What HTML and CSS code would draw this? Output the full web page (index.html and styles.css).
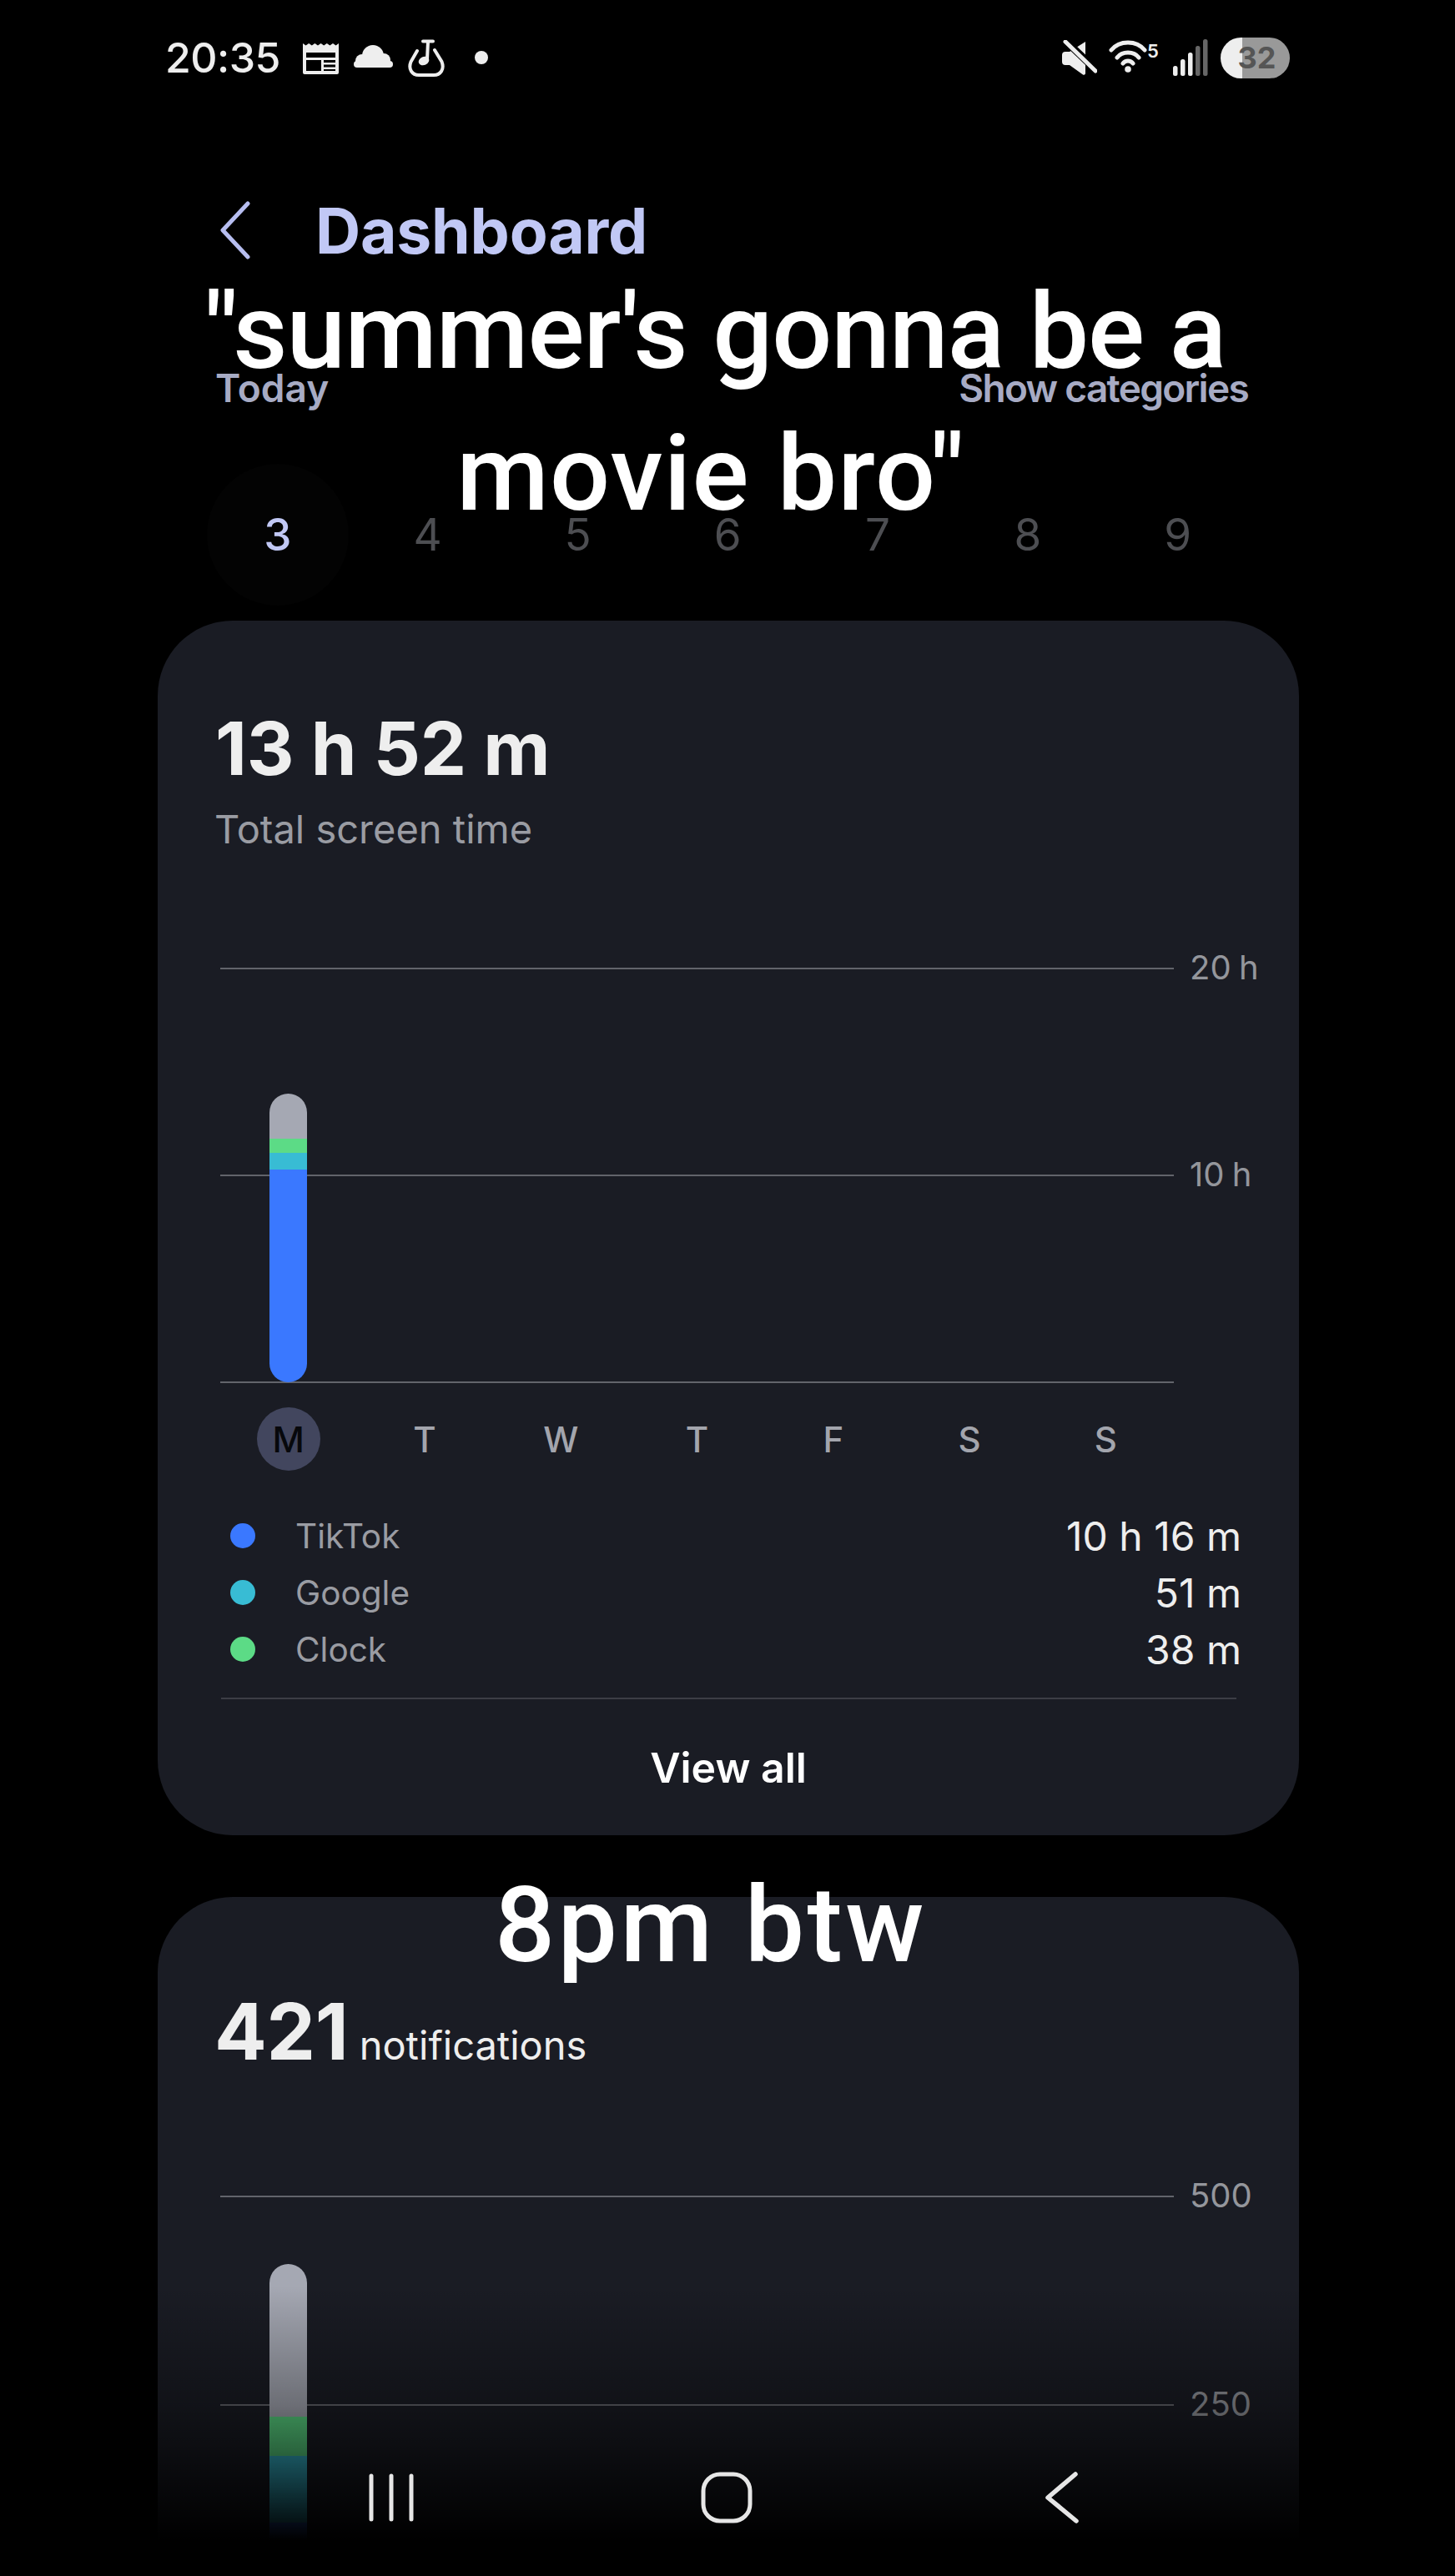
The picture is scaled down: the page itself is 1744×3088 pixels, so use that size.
FILE: index.html
```html
<!DOCTYPE html>
<html lang="en">
<head>
<meta charset="utf-8">
<title>Dashboard</title>
<link rel="stylesheet" href="styles.css">
</head>
<body>
<div class="page">
  <header class="status">
    <span class="clock">20:35</span>
    <svg class="ic-cal" viewBox="0 0 43 37" aria-hidden="true"><path fill="#eee" fill-rule="evenodd" d="M0 0l3.6 2.6L7.2 0l3.6 2.6L14.4 0 18 2.6 21.600 0l3.6 2.600L28.800 0l3.600 2.600L36 0l3.600 2.600L43 0v35a2 2 0 0 1-2 2H2a2 2 0 0 1-2-2zM4 11v6h35v-6zM4 20v13h18V20zM25 20v3h14v-3zM25 25.500v3h14v-3zM25 31v2h14v-2z"/></svg>
    <svg class="ic-cloud" viewBox="0 0 47 27" aria-hidden="true"><g fill="#eee"><circle cx="23" cy="13" r="13"/><circle cx="36" cy="18" r="8"/><circle cx="10" cy="19" r="8"/><rect x="0" y="19" width="47" height="8" rx="4"/></g></svg>
    <svg class="ic-note" viewBox="0 0 44 45" aria-hidden="true"><g fill="none" stroke="#eee" stroke-width="4" stroke-linecap="round"><path d="M11 14L3.500 27C0 36 5 43 13 43H31C39 43 44 36 40.500 27L32 13"/><path d="M18 2.500H30M24 3L23 24"/></g><ellipse cx="19" cy="26" rx="6.500" ry="5" fill="#eee" transform="rotate(-25 19 26)"/></svg>
    <span class="dot"></span>
    <div class="status-right">
      <svg class="ic-mute" viewBox="0 0 43 43" aria-hidden="true"><path fill="#eee" d="M1 18a4 4 0 0 1 4-4h5L29 2v38a2 2 0 0 1-3 1.500L10 30H5a4 4 0 0 1-4-4z"/><path d="M2 -2L44 38" stroke="#000" stroke-width="9"/><path d="M5 2L41 37" stroke="#eee" stroke-width="5" stroke-linecap="round"/></svg>
      <svg class="ic-wifi" viewBox="0 0 46 40" aria-hidden="true"><g fill="none" stroke="#eee" stroke-width="5" stroke-linecap="round"><path d="M3 13C13 1 33 1 43 13"/><path d="M10 22C16 14 30 14 36 22"/><path d="M17 29C20 25 26 25 29 29"/></g><circle cx="23" cy="36" r="3.800" fill="#eee"/></svg>
      <span class="wifi-num">5</span>
      <svg class="ic-signal" viewBox="0 0 42 44" aria-hidden="true"><rect x="0" y="32" width="5.500" height="12" rx="2.500" fill="#eee"/><rect x="9" y="24" width="5.500" height="20" rx="2.500" fill="#eee"/><rect x="18" y="16" width="5.500" height="28" rx="2.500" fill="#eee"/><rect x="27" y="8" width="5.500" height="36" rx="2.500" fill="#666"/><rect x="36" y="0" width="5.500" height="44" rx="2.500" fill="#666"/></svg>
      <span class="battery">32</span>
    </div>
  </header>

  <nav class="title-row">
    <svg class="back" viewBox="0 0 36 70" aria-hidden="true"><path d="M33 3L3 35L33 67" fill="none" stroke="#b7bef0" stroke-width="5" stroke-linecap="round" stroke-linejoin="round"/></svg>
    <h1 class="title">Dashboard</h1>
  </nav>

  <div class="range-row">
    <span>Today</span>
    <span class="show-cat">Show categories</span>
  </div>

  <div class="days">
    <span class="day day-on">3</span><span class="day">4</span><span class="day">5</span><span class="day">6</span><span class="day">7</span><span class="day">8</span><span class="day">9</span>
  </div>

  <section class="card">
    <div class="big">13 h 52 m</div>
    <div class="sub">Total screen time</div>
    <div class="chart chart-a">
      <div class="axis"><i></i><span>20 h</span></div>
      <div class="axis"><i></i><span>10 h</span></div>
      <div class="axis"><i class="base"></i><span></span></div>
      <div class="bar bar-a">
        <b class="seg-gray" style="height:54px"></b>
        <b class="seg-green" style="height:17px"></b>
        <b class="seg-cyan" style="height:20px"></b>
        <b class="seg-blue" style="height:255px"></b>
      </div>
    </div>
    <div class="week">
      <span class="wd wd-on">M</span><span class="wd">T</span><span class="wd">W</span><span class="wd">T</span><span class="wd">F</span><span class="wd">S</span><span class="wd">S</span>
    </div>
    <ul class="legend">
      <li><i class="seg-blue"></i><span class="name">TikTok</span><span class="val">10 h 16 m</span></li>
      <li><i class="seg-cyan"></i><span class="name">Google</span><span class="val">51 m</span></li>
      <li><i class="seg-green"></i><span class="name">Clock</span><span class="val">38 m</span></li>
    </ul>
    <div class="divider"></div>
    <div class="view-all">View all</div>
  </section>

  <section class="card card-b">
    <div class="count"><span class="big big-count">421</span><span class="count-label">notifications</span></div>
    <div class="chart chart-b">
      <div class="axis"><i></i><span>500</span></div>
      <div class="axis"><i></i><span>250</span></div>
      <div class="axis"><i class="base"></i><span></span></div>
      <div class="bar bar-b">
        <b class="seg-gray" style="height:183px"></b>
        <b class="seg-green" style="height:47px"></b>
        <b class="seg-cyan" style="height:80px"></b>
        <b class="seg-blue" style="height:110px"></b>
      </div>
    </div>
  </section>

  <div class="fade"></div>

  <div class="nav-bar">
    <svg class="nav-recent" viewBox="0 0 54 58" aria-hidden="true"><g stroke="#e6e6e6" stroke-width="5" stroke-linecap="round"><path d="M3 3V55M27 3V55M51 3V55"/></g></svg>
    <svg class="nav-home" viewBox="0 0 62 62" aria-hidden="true"><rect x="3" y="3" width="56" height="56" rx="20" fill="none" stroke="#e6e6e6" stroke-width="5"/></svg>
    <svg class="nav-back" viewBox="0 0 40 62" aria-hidden="true"><path d="M36 3L3 31L37 59" fill="none" stroke="#e6e6e6" stroke-width="5.500" stroke-linecap="round" stroke-linejoin="round"/></svg>
  </div>

  <div class="caption caption-a"><span class="cap-one">"summer's gonna be a</span><span class="cap-two">movie bro"</span></div>
  <div class="caption caption-b">8pm btw</div>
</div>
</body>
</html>
```
FILE: styles.css
```css
* { box-sizing: border-box; }
html, body { margin: 0; padding: 0; background: #000; }
body { height: 3088px; overflow: hidden; font-family: Inter, "Liberation Sans", sans-serif; color: #eee; }
.page { position: relative; width: 1744px; height: 3088px; overflow: hidden; }

/* status bar */
.status { height: 138px; padding: 0 198px; display: flex; align-items: center; }
.clock { font-size: 50px; font-weight: 500; width: 165px; letter-spacing: -0.5px; }
.ic-cal { width: 43px; height: 37px; margin-top: 2px; }
.ic-cloud { width: 47px; height: 27px; margin-left: 18px; margin-top: -4px; }
.ic-note { width: 44px; height: 45px; margin-left: 18px; }
.dot { width: 16px; height: 16px; border-radius: 50%; background: #eee; margin-left: 36px; }
.status-right { margin-left: auto; display: flex; align-items: center; }
.ic-mute { width: 43px; height: 43px; margin-right: 14px; }
.ic-wifi { width: 46px; height: 40px; margin-top: -5px; }
.wifi-num { width: 16px; height: 44px; margin-right: 15px; font-size: 22px; font-weight: 600; line-height: 28px; color: #eee; }
.ic-signal { width: 42px; height: 44px; margin-right: 15px; }
.battery { width: 83px; height: 49px; border-radius: 25px; display: flex; align-items: center; justify-content: center; padding-left: 4px;
  background: linear-gradient(to right, #eee 0 26px, #999 26px); color: #555; font-size: 36px; font-weight: 700; }

/* title */
.title-row { height: 276px; display: flex; align-items: center; padding-left: 264px; }
.back { width: 36px; height: 70px; }
.title { margin: 0 0 0 78px; font-size: 75px; font-weight: 700; color: #c1c8f5; letter-spacing: -0.2px; line-height: 1; }

/* range */
.range-row { height: 102px; margin-bottom: 21px; padding: 0 248px 0 258px; display: flex; justify-content: space-between; align-items: center; font-size: 46px; font-weight: 600; color: #a7abc4; }
.show-cat { letter-spacing: -1.7px; }

/* days */
.days { height: 207px; padding-left: 243px; display: grid; grid-template-columns: repeat(7, 179.8px); align-items: center; }
.day { font-size: 53px; font-weight: 400; color: #4d4e52; text-align: center; line-height: 170px; }
.day-on { color: #c1c8f5; font-weight: 500; background: #030303; border-radius: 50%; width: 170px; height: 170px; justify-self: center; }

/* cards */
.card { margin-left: 189px; width: 1368px; background: #1a1c24; border-radius: 90px; padding-top: 103px; }
.card-b { margin-top: 74px; padding-top: 111px; }
.big { font-size: 88px; font-weight: 700; line-height: 100px; color: #eee; padding-left: 69px; letter-spacing: -0.3px; }
.big-count { font-size: 93px; padding-left: 68px; }
.sub { margin-top: 19px; padding-left: 68px; font-size: 47px; line-height: 56px; color: #9a9ca3; }
.count { display: flex; align-items: baseline; }
.count-label { margin-left: 13px; font-size: 47px; color: #eee; }

/* chart */
.chart { position: relative; margin-left: 75px; }
.chart-a { margin-top: 109px; display: flex; flex-direction: column; gap: 188px; }
.chart-b { margin-top: 118px; display: flex; flex-direction: column; gap: 190px; height: 780px; }
.axis { height: 60px; display: flex; align-items: center; font-size: 40px; color: #94969c; word-spacing: -2px; }
.axis span { width: 131px; margin-left: 19px; margin-top: -3px; }
.axis i { flex: 1; height: 2px; background: #62646b; }
.bar { position: absolute; left: 59px; width: 45px; display: flex; flex-direction: column; border-radius: 23px; overflow: hidden; }
.bar b { display: block; flex: none; }
.bar-a { top: 180px; height: 346px; }
.bar-b { top: 111px; height: 420px; }
.seg-gray { background: #a5a8b3; }
.seg-green { background: #5cdb86; }
.seg-cyan { background: #38bcd4; }
.seg-blue { background: #3a78ff; }

/* week */
.week { margin-left: 75px; display: grid; grid-template-columns: repeat(7, 163.3px); height: 76px; align-items: center; justify-items: center; }
.wd { font-size: 42px; font-weight: 500; color: #a3a5ad; }
.wd-on { width: 76px; height: 76px; border-radius: 50%; background: #42465e; color: #07080c; display: flex; align-items: center; justify-content: center; }

/* legend */
.legend { list-style: none; margin: 44px 0 0; padding: 0 69px 0 87px; }
.legend li { height: 68px; display: flex; align-items: center; }
.legend i { width: 30px; height: 30px; border-radius: 50%; }
.name { margin-left: 48px; font-size: 40.500px; color: #9a9ca3; }
.val { margin-left: auto; font-size: 48px; color: #eee; }
.divider { height: 2px; margin: 24px 75px 0 76px; background: #3c3d45; }
.view-all { height: 163px; display: flex; align-items: center; justify-content: center; font-size: 50px; font-weight: 600; color: #fff; }

/* overlays */
.fade { position: absolute; left: 0; right: 0; top: 2740px; height: 348px; background: linear-gradient(to bottom, rgba(0,0,0,0) 0, rgba(0,0,0,.34) 142px, rgba(0,0,0,.58) 210px, #000 305px); }
.nav-bar { position: absolute; left: 268px; top: 2963px; display: grid; grid-template-columns: repeat(3, 402px); justify-items: center; align-items: center; height: 62px; }
.nav-recent { width: 54px; height: 58px; }
.nav-home { width: 62px; height: 62px; }
.nav-back { width: 40px; height: 62px; }
.caption { position: absolute; left: 0; width: 1704px; text-align: center; font-family: Roboto, Inter, sans-serif; font-size: 127px; font-weight: 500; line-height: 170px; color: #fff; }
.cap-one { display: block; padding-left: 10px; letter-spacing: -1px; }
.cap-two { display: block; letter-spacing: 1.3px; }
.caption-a { top: 313px; }
.caption-b { top: 2223px; letter-spacing: 3.5px; }
```
